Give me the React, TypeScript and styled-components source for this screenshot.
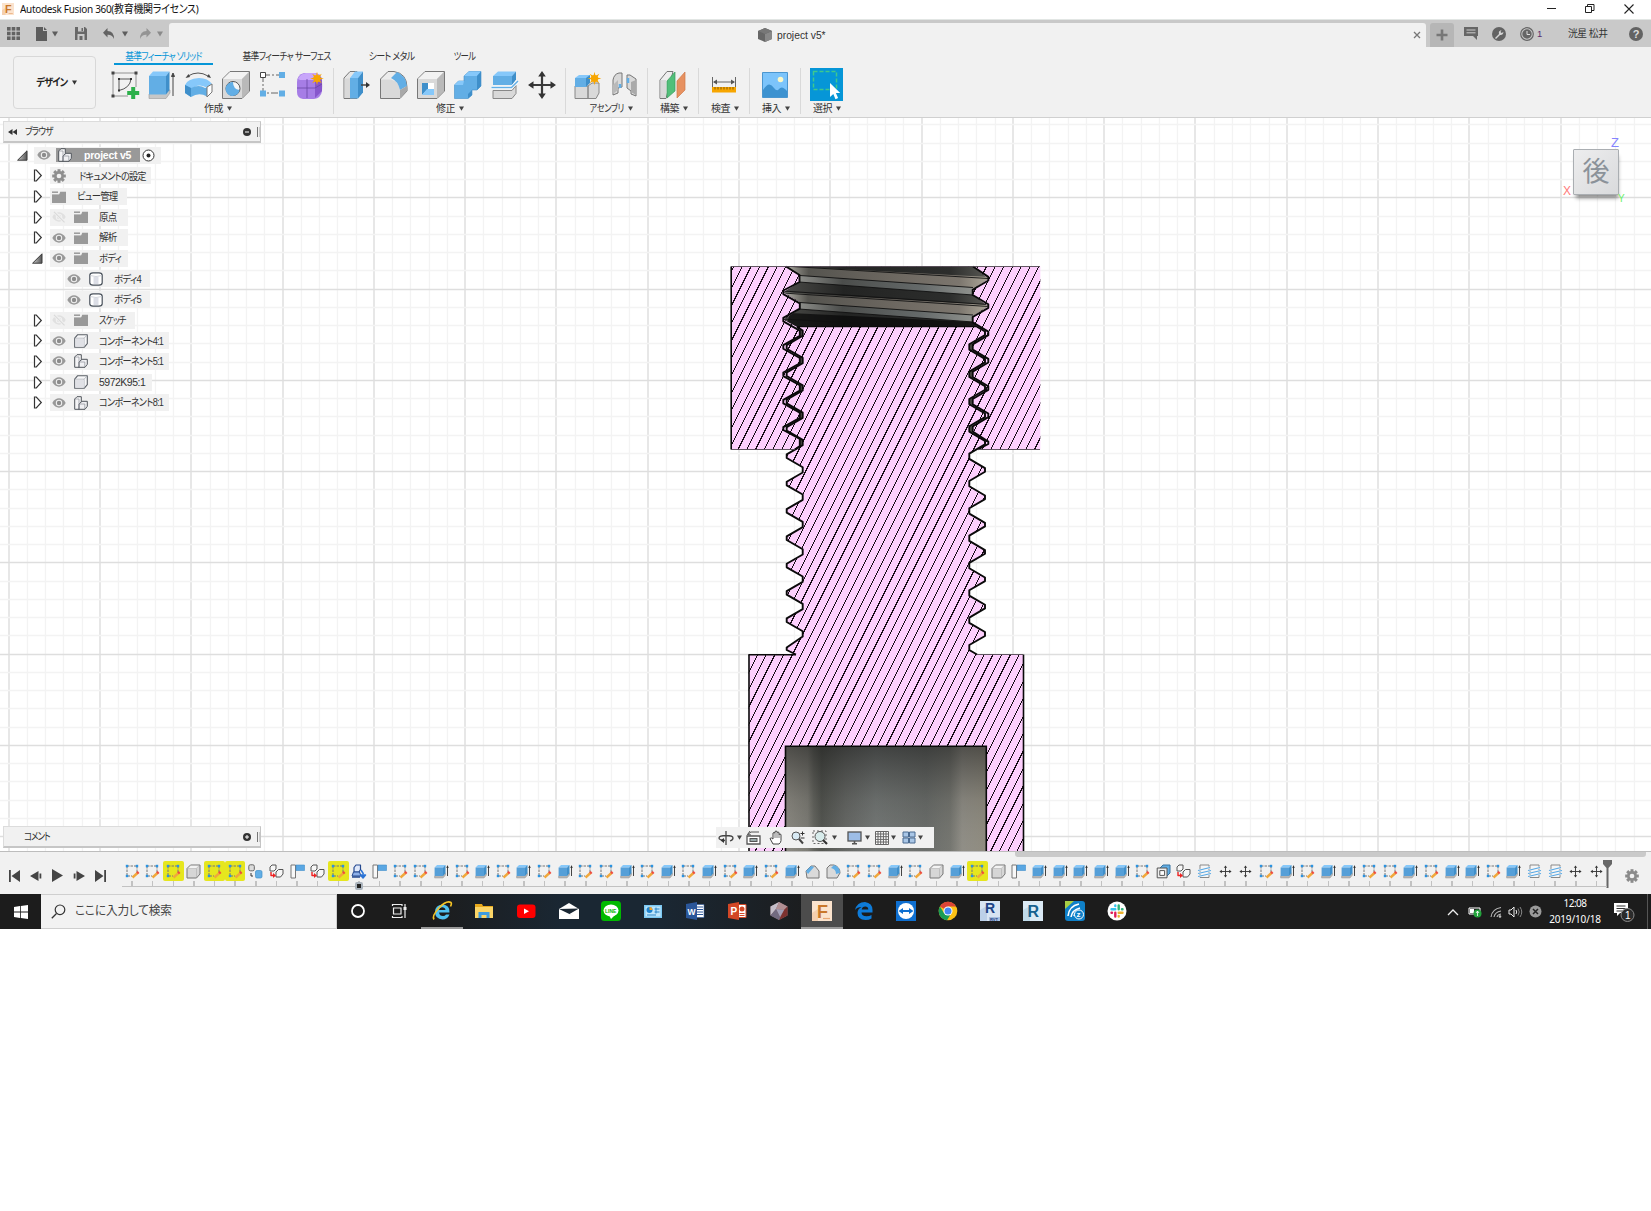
import React from "react";
import styled, { createGlobalStyle } from "styled-components";

const GlobalStyle = createGlobalStyle`
  * { box-sizing: border-box; }
  body { margin: 0; background: #fff; overflow: hidden; }
  svg { display: block; flex: none; overflow: visible; }
`;

const Screen = styled.div`
  width: 1651px;
  height: 1211px;
  background: #fff;
  display: flex;
  flex-direction: column;
  font-family: "Liberation Sans", "Noto Sans CJK JP", sans-serif;
  font-feature-settings: "palt";
  font-size: 10.5px;
  color: #333;
`;

const Label = styled.span<{ $ls?: number; $size?: number; $bold?: boolean; $color?: string; $sx?: number; $origin?: string }>`
  display: inline-block;
  white-space: nowrap;
  line-height: 1;
  letter-spacing: ${(p) => p.$ls ?? 0}px;
  font-size: ${(p) => p.$size ?? 10.5}px;
  font-weight: ${(p) => (p.$bold ? 700 : 400)};
  color: ${(p) => p.$color ?? "inherit"};
  transform: ${(p) => (p.$sx ? `scaleX(${p.$sx})` : "none")};
  transform-origin: ${(p) => p.$origin ?? "left"} center;
`;

const Gap = styled.div<{ $w: number }>`
  width: ${(p) => p.$w}px;
  flex: none;
`;

/* ---------- window title ---------- */
const TitleBar = styled.div`
  height: 20px;
  display: flex;
  align-items: center;
  padding: 0 17px 2px 2px;
  border-bottom: 1px solid #e2e6e4;
  color: #111;
  font-family: "Noto Sans", "Noto Sans CJK JP", sans-serif;
`;
const WindowButtons = styled.div`
  margin-left: auto;
  display: flex;
  align-items: center;
  gap: 29px;
`;

/* ---------- application bar ---------- */
const AppBar = styled.div`
  height: 27px;
  background: #c9c9c9;
  display: flex;
  align-items: flex-end;
`;
const QuickTools = styled.div`
  width: 169px;
  height: 27px;
  display: flex;
  align-items: center;
  padding-left: 7px;
`;
const DocTab = styled.div`
  width: 1257px;
  height: 24px;
  background: #f1f1f1;
  border-radius: 3px 3px 0 0;
  display: flex;
  align-items: center;
  padding-left: 589px;
`;
const CloseTab = styled.div`
  margin-left: auto;
  margin-right: 5px;
`;
const NewTab = styled.div`
  margin-left: 4px;
  width: 24px;
  height: 24px;
  background: #b6b6b6;
  border-radius: 3px 3px 0 0;
  display: grid;
  place-items: center;
`;
const AccountTools = styled.div`
  height: 27px;
  flex: 1;
  display: flex;
  align-items: center;
  padding-left: 10px;
`;

/* ---------- ribbon ---------- */
const Ribbon = styled.div`
  height: 71px;
  margin-bottom: -1px;
  background: #f1f1f1;
  border-bottom: 1px solid #d0d0d0;
  display: flex;
  padding-left: 13px;
`;
const Workspace = styled.button`
  margin: 9px 12px 0 0;
  padding: 0;
  width: 83px;
  height: 53px;
  border: 1px solid #d8d8d8;
  border-radius: 4px;
  background: #f2f2f2;
  display: flex;
  align-items: center;
  justify-content: center;
  gap: 5px;
  font: inherit;
  color: #222;
`;
const RibbonBody = styled.div`
  display: flex;
  flex-direction: column;
`;
const Tabs = styled.div`
  display: flex;
  height: 18px;
  padding-left: 6px;
`;
const Tab = styled.div<{ $active?: boolean; $w: number }>`
  width: ${(p) => p.$w}px;
  height: 18px;
  padding-top: 4px;
  display: flex;
  justify-content: center;
  border-bottom: ${(p) => (p.$active ? "2px solid #0696d7" : "none")};
  color: ${(p) => (p.$active ? "#0696d7" : "#333")};
`;
const Groups = styled.div`
  display: flex;
  padding-top: 3px;
`;
const Group = styled.div<{ $w: number; $shift: number }>`
  width: ${(p) => p.$w}px;
  height: 46px;
  flex: none;
  display: flex;
  flex-direction: column;
  align-items: center;
  padding-right: ${(p) => p.$shift}px;
  border-right: 1px solid #d9d9d9;
  &:last-child { border-right: none; }
`;
const IconRow = styled.div`
  height: 33px;
  display: flex;
  align-items: center;
  gap: 7px;
`;
const GroupLabel = styled.div`
  display: flex;
  align-items: center;
  gap: 4px;
  height: 13px;
  padding-top: 2px;
`;
const SelectTile = styled.div`
  width: 33px;
  height: 33px;
  background: #0696d7;
  display: grid;
  place-items: center;
`;

/* ---------- canvas and panels ---------- */
const CanvasArea = styled.div`
  position: relative;
  height: 734px;
  overflow: hidden;
  border-top: 1px solid #d0d0d0;
`;
const Overlay = styled.div<{ $x: number; $y: number }>`
  position: absolute;
  left: ${(p) => p.$x}px;
  top: ${(p) => p.$y - 1}px;
`;
const PanelBar = styled.div`
  width: 258px;
  height: 22px;
  background: #f1f1f1;
  border: 1px solid #dcdcdc;
  border-right-color: #c4c4c4;
  border-bottom: 2px solid #c6c6c6;
  display: flex;
  align-items: center;
  padding: 0 0 0 4px;
`;
const PanelEnd = styled.div`
  margin-left: auto;
  display: flex;
  align-items: center;
  gap: 6px;
`;
const Grip = styled.div`
  width: 3px;
  height: 10px;
  border-left: 1px solid #777;
  border-right: 1px solid #ccc;
`;
const Tree = styled.div`
  display: flex;
  flex-direction: column;
  padding-top: 2.5px;
`;
const TreeRow = styled.div<{ $indent: number }>`
  height: 20.62px;
  display: flex;
  align-items: center;
  padding-left: ${(p) => p.$indent}px;
`;
const TreeArrow = styled.div<{ $wide?: boolean }>`
  width: ${(p) => (p.$wide ? 18 : 17)}px;
  flex: none;
`;
const TreeBox = styled.div<{ $w: number }>`
  width: ${(p) => p.$w}px;
  height: 17px;
  background: #f1f1f1;
  display: flex;
  align-items: center;
  padding-left: 2px;
`;
const RootName = styled.div`
  width: 84px;
  height: 14px;
  margin: 0 2px 0 5px;
  background: #999;
  display: flex;
  align-items: center;
  padding-left: 2px;
  gap: 12px;
`;
const NavBar = styled.div`
  width: 218px;
  height: 21px;
  background: #f1f1f1;
  display: flex;
  align-items: center;
  padding-left: 2px;
`;
const Cube = styled.div`
  width: 46px;
  height: 46px;
  border: 1px solid #aaaeb2;
  border-radius: 1px;
  background: linear-gradient(135deg, #ededee, #d9dadc);
  box-shadow: 1px 5px 4px -2px rgba(0, 0, 0, 0.45);
  display: grid;
  place-items: center;
`;

/* ---------- timeline ---------- */
const TimelineBar = styled.div`
  height: 43px;
  background: #f1f1f1;
  border-top: 1px solid #bdbdbd;
  display: flex;
  flex-direction: column;
`;
const ScrollTrack = styled.div`
  height: 5px;
  flex: none;
  padding: 0 5px 0 1015px;
`;
const ScrollThumb = styled.div`
  height: 5px;
  background: #cacaca;
  border-radius: 0 0 3px 3px;
`;
const TimelineRow = styled.div`
  display: flex;
  height: 37px;
`;
const Playback = styled.div`
  width: 121.7px;
  flex: none;
  display: flex;
  align-items: center;
  gap: 10px;
  padding: 0 0 0 9px;
  height: 37px;
`;
const Feature = styled.div`
  position: relative;
  width: 20.64px;
  height: 30px;
  flex: none;
  display: flex;
  flex-direction: column;
  align-items: center;
  border-bottom: 1px solid #c2c2c2;
`;
const FeatureTile = styled.div<{ $on?: boolean }>`
  margin-top: 4px;
  width: 20.6px;
  height: 20px;
  border-radius: 2px;
  background: ${(p) => (p.$on ? "#e6e61e" : "transparent")};
  display: grid;
  place-items: center;
`;
const Tick = styled.div`
  width: 1.5px;
  height: 5px;
  background: #c2c2c2;
`;
const GroupMark = styled.div`
  position: absolute;
  top: 25px;
  width: 8px;
  height: 8px;
  background: #222;
  border: 2px solid #aab3bc;
  border-radius: 2px;
`;
const Playhead = styled.svg`
  margin: 3px 0 0 -4px;
`;

/* ---------- taskbar ---------- */
const Taskbar = styled.div`
  height: 35px;
  background: linear-gradient(90deg, #1c1c1c 0 26%, #1a2733 34%, #1a2733 40%, #1c1c1c 50%);
  display: flex;
`;
const StartButton = styled.div`
  width: 41px;
  display: grid;
  place-items: center;
`;
const SearchBox = styled.div`
  width: 295.5px;
  background: #f2f2f2;
  border: 1px solid #cfcfcf;
  border-left: 0;
  display: flex;
  align-items: center;
  padding-left: 10px;
  gap: 9px;
  color: #444;
  font-family: "Noto Sans", "Noto Sans CJK JP", sans-serif;
`;
const TaskItem = styled.div<{ $active?: boolean; $open?: boolean }>`
  width: 42.2px;
  height: 35px;
  padding-bottom: 1px;
  display: grid;
  place-items: center;
  background: ${(p) => (p.$active ? "#4c4c4c" : "transparent")};
  box-shadow: ${(p) => (p.$open || p.$active ? "inset 0 -2px 0 #9a9a9a" : "none")};
`;
const Tray = styled.div`
  margin-left: auto;
  display: flex;
  align-items: center;
  color: #fff;
  font-family: "Noto Sans", sans-serif;
`;
const Clock = styled.div`
  width: 56px;
  margin-left: 5px;
  display: flex;
  flex-direction: column;
  align-items: center;
  gap: 6px;
  padding-bottom: 2px;
`;
const ShowDesktop = styled.div`
  margin-left: 13px;
  width: 4px;
  height: 35px;
  border-left: 1px solid #555;
`;

/* ---------- small glyphs ---------- */
const Caret = ({ c = "#444", s = 5 }: { c?: string; s?: number }) => (
  <svg width={s} height={s} viewBox="0 0 6 6"><path d="M0 .6h6L3 5.6z" fill={c} /></svg>
);
const FusionLogo = ({ s }: { s: number }) => (
  <svg width={s} height={s} viewBox="0 0 20 20">
    <rect width="20" height="20" fill="#fbe3cd" />
    <path d="M0 12l6-4v12H0z" fill="#f5cfae" />
    <text x="5" y="16.5" fontSize="18" fontWeight="700" fill="#c9772b" fontFamily="Liberation Sans">F</text>
    <path d="M11 17.5h7" stroke="#e8a877" strokeWidth="1.2" />
  </svg>
);
const Gear = ({ s = 14, c = "#8f8f8f", hole = "#f1f1f1" }: { s?: number; c?: string; hole?: string }) => (
  <svg width={s} height={s} viewBox="-8 -8 16 16">
    {[0, 45, 90, 135].map((a) => (
      <rect key={a} x="-1.7" y="-7.8" width="3.4" height="15.6" fill={c} transform={`rotate(${a})`} />
    ))}
    <circle r="5.6" fill={c} />
    <circle r="2.7" fill={hole} />
  </svg>
);
const Eye = ({ off }: { off?: boolean }) => (
  <svg width="14" height="12" viewBox="0 0 14 12">
    <path d="M.3 6C3.500-.2 10.500-.2 13.700 6 10.500 12.200 3.500 12.200.3 6z" fill={off ? "#e0e0e0" : "#999"} />
    <circle cx="7" cy="6" r="3.200" fill="#f1f1f1" />
    <circle cx="7" cy="6" r="2.200" fill={off ? "#e0e0e0" : "#8c8c8c"} />
    {off && <path d="M2 .8l10.500 10.500" stroke="#f1f1f1" strokeWidth="3" />}
    {off && <path d="M2 .8l10.500 10.500" stroke="#dadada" strokeWidth="1.2" />}
  </svg>
);
const Folder = () => (
  <svg width="14" height="12" viewBox="0 0 14 12">
    <path d="M0 3.400h14V12H0z" fill="#999" />
    <path d="M0 1.200h6" stroke="#999" strokeWidth="1.500" />
    <path d="M7 4l1.200-3.300H14V4z" fill="#999" />
  </svg>
);
const BodyIcon = () => (
  <svg width="14" height="14" viewBox="0 0 14 14">
    <path d="M.8 3.200Q.8.800 4 .8h6q3.200 0 3.200 2.400v7.600q0 2.400-3.200 2.400H4Q.8 13.200.8 10.800z" fill="#fff" stroke="#4a525c" strokeWidth="1.200" />
    <path d="M4.500 5h5v7h-5z" fill="#dcdee6" />
    <path d="M1.500 3.600q5.500 1.800 11 0" stroke="#c5c9d0" fill="none" strokeWidth=".8" />
  </svg>
);
const PartIcon = () => (
  <svg width="14" height="14" viewBox="0 0 14 14">
    <path d="M.7 4.200L3.700.7h9.600v9l-3.200 3.600H.7z" fill="#f7f7f9" stroke="#5a5f66" strokeWidth="1.100" strokeLinejoin="round" />
    <path d="M.7 4.200h9.400v9.100M10.100 4.200L13.300.7" stroke="#aaaeb5" fill="none" strokeWidth=".8" />
    <path d="M1.300 4.800h8.200v7.900H1.300z" fill="#e0e1e6" />
  </svg>
);
const AssemblyIcon = ({ s = 14 }: { s?: number }) => (
  <svg width={s} height={s} viewBox="0 0 14 14">
    <path d="M.7 3L3 .7h4.300v5L5 13.300H.7z" fill="#f4f4f6" stroke="#50555c" strokeLinejoin="round" />
    <path d="M5 8l3-2.700h5.300v5L11 13.300H5z" fill="#f0f0f3" stroke="#50555c" strokeLinejoin="round" />
    <path d="M.7 3H5V13M5 8h5.800v5" stroke="#8c9198" strokeWidth=".7" fill="none" />
  </svg>
);
const ClosedArrow = () => (
  <svg width="10" height="13" viewBox="0 0 10 13"><path d="M1.500 1h1.800l5 5.500-5 5.500H1.500z" fill="#fff" stroke="#333" strokeWidth="1.200" /></svg>
);
const OpenArrow = () => (
  <svg width="11" height="11" viewBox="0 0 11 11">
    <defs><linearGradient id="tri" x1="0" x2="1" y1="0" y2="0"><stop offset="0" stopColor="#ccc" /><stop offset="1" stopColor="#555" /></linearGradient></defs>
    <path d="M10 .8V10.200H.6z" fill="url(#tri)" stroke="#3a3a3a" strokeWidth="1" />
  </svg>
);

/* ---------- ribbon icons ---------- */
const Ico = ({ children }: { children: React.ReactNode }) => (
  <svg width="30" height="30" viewBox="0 0 30 30" strokeLinejoin="round">{children}</svg>
);
const BLUE = "#62aee5";
const LIGHT = "#86c8fa";
const DEEP = "#3f8fca";
const GRAY = "#d9d9d9";
const EDGE = "#777";
const Star = ({ x, y }: { x: number; y: number }) => (
  <g transform={`translate(${x} ${y})`}>
    {[0, 45, 90, 135].map((a) => (
      <path key={a} d="M0-6.800L1.700 0 0 6.800-1.700 0z" fill="#f7a600" transform={`rotate(${a})`} />
    ))}
    <circle r="3.600" fill="#f7a600" />
  </g>
);
const SketchBig = () => (
  <Ico>
    <path d="M3 3h23v14M3 3v23h15" fill="none" stroke="#888" strokeWidth=".9" />
    {[[3, 3], [26, 3], [3, 26]].map(([x, y]) => <rect key={`${x}-${y}`} x={x - 1.500} y={y - 1.500} width="3" height="3" fill="#444" />)}
    <path d="M9 9h12q-1 9-12 11.500z" fill="none" stroke="#555" />
    {[[9, 9], [21, 9], [9, 20.500]].map(([x, y]) => <rect key={`${x}-${y}`} x={x - 1} y={y - 1} width="2" height="2" fill="#333" />)}
    <path d="M21.200 17h4v4h4v4h-4v4h-4v-4h-4v-4h4z" fill="#2db04b" />
  </Ico>
);
const ExtrudeBig = () => (
  <Ico>
    <path d="M2 24l4-3 17-1v3l-4 5.500H2z" fill="#c7c7c7" stroke="#999" strokeWidth=".6" />
    <path d="M2 6l4-4.500h16.500L19 6z" fill={LIGHT} />
    <path d="M2 6h17v18.500H2z" fill={BLUE} />
    <path d="M19 6l3.500-4.500V20L19 24.500z" fill={DEEP} />
    <path d="M26 5v21M24.500 6.500L26 3l1.500 3.500z" stroke="#444" fill="#444" />
  </Ico>
);
const RevolveBig = () => (
  <Ico>
    <path d="M1 15q2-6 14-7 9 0 13 6l-5 4Q15 12 6 20z" fill={LIGHT} />
    <path d="M1 15l6 3q8-4 14 0l2 0v8.500q-8-4.500-16 .5l-6-4z" fill={BLUE} />
    <path d="M1 15l6 3v9l-6-4z" fill={DEEP} />
    <path d="M23 17l5-3v8l-5 5z" fill="#fff" stroke={EDGE} />
    <path d="M4 6q10-6 20 0" fill="none" stroke="#555" />
    <path d="M1.500 8l3-4 1.500 3zM27 8l-4-1 1.800-3z" fill="#444" />
  </Ico>
);
const CubeBase = () => (
  <>
    <path d="M1.500 9L9 1.500h19.500V21L21 28.500H1.500z" fill={GRAY} stroke={EDGE} />
    <path d="M2 9L9.200 2h18.500L21 9z" fill="#f2f2f2" />
    <path d="M21 9l7-7v19l-7 7z" fill="#b9b9b9" />
  </>
);
const HoleBig = () => (
  <Ico>
    <CubeBase />
    <circle cx="12" cy="18.500" r="7" fill="#f6f6f6" stroke="#555" />
    <path d="M12 12a7 7 0 106.500 8Q12 19 12 12z" fill={BLUE} />
  </Ico>
);
const PatternBig = () => (
  <Ico>
    <path d="M5 5h19M5 5v18h19" stroke="#666" fill="none" strokeDasharray="7 2 2 2" />
    <rect x="2.500" y="2.500" width="5" height="5" fill="#fff" stroke="#444" />
    <rect x="21" y="2" width="6" height="6" fill={BLUE} /><rect x="2" y="20.500" width="6" height="6" fill={BLUE} />
    <rect x="21" y="20.500" width="6" height="6" fill={BLUE} />
  </Ico>
);
const FormBig = () => (
  <Ico>
    <path d="M2 12Q2 5 9 3h12q6 2 6 8v10q-1 7-8 8H8Q2 28 2 22z" fill="#a67de6" />
    <path d="M3 9q2-5 8-6h9q4 1 5 3l-4 4H5z" fill="#c8a6fa" />
    <path d="M20 10l6-3q1.500 4 1 14l-7 7z" fill="#8756cc" />
    <path d="M2 18h18l7-4M12 9v19" stroke="#6b46a5" strokeWidth=".8" fill="none" />
    <Star x={22} y={8.500} />
  </Ico>
);
const PressPull = () => (
  <Ico>
    <path d="M2 8l6-6.500h7V28.500H2z" fill="#e6e6e6" stroke={EDGE} />
    <path d="M2.500 8.500h6V28h-6z" fill={GRAY} />
    <path d="M8 8l5-6.500h8L16 8z" fill={LIGHT} /><path d="M8 8h8v20.500H8z" fill={BLUE} />
    <path d="M16 8l5-6.500v21L16 28.500z" fill={DEEP} />
    <path d="M19 15h7" stroke="#444" strokeWidth="1.500" /><path d="M24 12l4 3-4 3z" fill="#333" />
  </Ico>
);
const FilletBig = () => (
  <Ico>
    <path d="M1.500 9L9 1.500h6q13 2 13 16V21l-7 7.500H1.500z" fill="#ececec" stroke={EDGE} />
    <path d="M2 9.500h10Q21 12 21 21v7H2z" fill={GRAY} />
    <path d="M12 8l6-6q9 4 10 14l-7 4Q19 11 12 8z" fill={BLUE} />
    <path d="M21 20l7-4v5l-7 7z" fill="#a8a8a8" />
  </Ico>
);
const ShellBig = () => (
  <Ico>
    <CubeBase />
    <rect x="6" y="13" width="12" height="12" fill="#fff" />
    <path d="M6 13h6v6l-6 6z" fill={DEEP} /><path d="M6 25l5-6h7v6z" fill={LIGHT} />
  </Ico>
);
const CombineBig = () => (
  <Ico>
    <path d="M1.500 15l4-4H11V6l5-4.500h12V16l-4 4h-5v5l-4 3.500H1.500z" fill={BLUE} stroke={DEEP} strokeWidth=".6" />
    <path d="M11 6l5-4.500h12L24 6z" fill={LIGHT} /><path d="M24 6l4-4.500V16l-4 4z" fill={DEEP} />
    <path d="M1.500 15l4-4H11l-1 4z" fill={LIGHT} /><path d="M15 24l4-4v5l-4 3.500z" fill={DEEP} />
  </Ico>
);
const SplitBig = () => (
  <Ico>
    <path d="M3 6l5-4.500h18L22 6z" fill={LIGHT} /><path d="M3 6h19v9H3z" fill={BLUE} /><path d="M22 6l4-4.500v8L22 15z" fill={DEEP} />
    <path d="M3 20.500h19l4-5v8L22 28.500H3z" fill={GRAY} stroke="#888" />
    <path d="M1.500 17.500h20L28 11" stroke="#fff" strokeWidth="3" fill="none" />
    <path d="M1.500 17.500h20L28 11" stroke={BLUE} strokeWidth="1.500" fill="none" />
  </Ico>
);
const MovePath = () => (
  <>
    <path d="M15 5v20M5 15h20" stroke="#3a3a3a" strokeWidth="2.200" />
    <path d="M15 1l3.800 5.500h-7.600zM15 29l3.800-5.500h-7.600zM1 15l5.500-3.800v7.600zM29 15l-5.500-3.800v7.600z" fill="#333" />
  </>
);
const MoveBig = () => <Ico><MovePath /></Ico>;
const NewComp = () => (
  <Ico>
    <path d="M2 16h13v12.500H2zM15 16l4-3h7v10l-3 5.500H15z" fill={GRAY} stroke="#888" />
    <path d="M2 8l4-3h11l-2 3z" fill={LIGHT} /><path d="M2 8h11v9H2z" fill={BLUE} /><path d="M13 8l4-3v8l-4 4z" fill={DEEP} />
    <Star x={21.500} y={8.500} />
  </Ico>
);
const JointBig = () => (
  <Ico>
    <path d="M3 25V10q1-6 6-7h3v14l-4 1v5z" fill={GRAY} stroke={EDGE} /><path d="M3 24v-9l5-5v10z" fill="#b9b9b9" />
    <path d="M26 26V9l-6-4h-3v13l4 3v3z" fill={GRAY} stroke={EDGE} /><path d="M21 12l5-2v15l-5-3z" fill="#aaa" />
    <path d="M13 9v7h3V9z" fill="#f1f1f1" /><path d="M18 8v5M10 14v4" stroke={BLUE} strokeWidth="2.500" />
  </Ico>
);
const PlaneBig = () => (
  <Ico>
    <path d="M2 10l7-8.500h6L8 28.500H2z" fill="#eee" stroke={EDGE} /><path d="M2.500 10H8v18H2.500z" fill={GRAY} />
    <path d="M9 11l8-9v19l-8 7z" fill="#52bf7a" stroke="#399b5b" strokeWidth=".7" />
    <path d="M19 11l8-9v18l-8 8z" fill="#e79160" stroke="#cf7847" strokeWidth=".7" />
  </Ico>
);
const MeasureBig = () => (
  <Ico>
    <path d="M3.500 7v10M26.500 7v10M5 12h20" stroke="#666" fill="none" /><path d="M4 12l4-2.500v5zM26 12l-4-2.500v5z" fill="#555" />
    <rect x="3" y="17" width="24" height="5.500" fill="#f7a600" />
    <path d="M6 17v2.500M9 17v2.500M12 17v2.500M15 17v2.500M18 17v2.500M21 17v2.500M24 17v2.500" stroke="#8a5b00" />
  </Ico>
);
const ImageBig = () => (
  <Ico>
    <rect x="2.500" y="2.500" width="25" height="25" fill="#7cc4fb" stroke="#4b96cf" />
    <path d="M3 20Q9 10 14 18q3 4 5 1 3-4 8 2v6H3z" fill="#3d92d0" /><circle cx="20.500" cy="9.500" r="2.800" fill="#fbf8c8" />
  </Ico>
);
const SelectBig = () => (
  <svg width="31" height="31" viewBox="0 0 31 31">
    <rect x="2.500" y="2.500" width="23" height="18" fill="none" stroke="#3fc88d" strokeWidth="1.500" strokeDasharray="4 2" />
    <path d="M19 14v14l3.300-3 2.200 5.200 2.600-1.200-2.200-5h4.300z" fill="#fff" />
  </svg>
);

/* ---------- timeline icons ---------- */
const T = ({ children }: { children: React.ReactNode }) => (
  <svg width="15" height="15" viewBox="0 0 15 15" strokeLinejoin="round">{children}</svg>
);
const TSketch = () => (
  <T>
    <path d="M2 2h10M2 2v10h5M12 2v6" stroke="#777" strokeDasharray="2.500 1" fill="none" />
    {[[2, 2], [12, 2], [2, 12]].map(([x, y]) => <rect key={`${x}${y}`} x={x - 1.200} y={y - 1.200} width="2.400" height="2.400" fill="#2b93e0" />)}
    <path d="M7.500 13.500l5-4.500" stroke="#f0a83c" strokeWidth="2.400" /><path d="M12 9.300l1.600-1.400" stroke="#ee4b3e" strokeWidth="2.600" />
  </T>
);
const TExtrude = () => (
  <T>
    <path d="M.6 12v2H9l2.500-3V9z" fill="#b5b5b5" stroke="#999" strokeWidth=".5" />
    <path d="M.6 3.500L3 1h8.500L9 3.500z" fill={LIGHT} /><path d="M.6 3.500H9V12H.6z" fill="#559fd8" /><path d="M9 3.500L11.500 1v8L9 12z" fill={DEEP} />
    <path d="M13.500 2v10" stroke="#444" /><path d="M12.300 4l1.200-3 1.200 3z" fill="#333" />
  </T>
);
const TBox = () => (
  <T><path d="M1 4.500L4.500 1H14v9l-3.500 4H1z" fill="#d6d6d6" stroke="#777" /><path d="M1.500 4.500L4.700 1.500h8.500l-3 3zM10.500 4.500v9" fill="#f3f3f3" stroke="#999" strokeWidth=".4" /></T>
);
const TComp = () => (
  <T><rect x=".8" y=".8" width="5.500" height="6" rx="1.500" fill="#ddd" stroke="#666" /><path d="M3 9v3h2" stroke="#333" fill="none" /><rect x="7.500" y="6.500" width="6.500" height="7.500" rx="1.500" fill={BLUE} stroke={DEEP} strokeWidth=".7" /></T>
);
const TLink = () => (
  <T><path d="M1 3l2-2h4v4L5 7H1zM7 8l2.500-2.500H14v4.500L11.500 13H7z" fill="#f7f7f7" stroke="#555" /><path d="M2 8v3.500h3" stroke="#e22" strokeWidth="1.400" fill="none" /><path d="M4 9l3 2.500L4 14z" fill="#e22" /></T>
);
const TFlag = () => (
  <T><path d="M1 1h4.500v13H1z" fill="#f8f8f8" stroke="#777" /><path d="M6 1h8.500v5.500H6z" fill="#5aa7e3" stroke={DEEP} strokeWidth=".6" /></T>
);
const TInsert = () => (
  <T>
    <path d="M3 7V3.500L5 1h4.500v4.500L8 8H3z" fill="#dfe8fa" stroke="#25498f" strokeWidth="1.200" />
    <path d="M1 12l1.500-4h6L10 12z" fill="#8fb0e8" stroke="#25498f" /><path d="M1 13h8" stroke="#25498f" strokeWidth="1.500" />
    <path d="M10 6l2.500 4M9.500 11h5L12 14z" fill="#2b74d6" stroke="#2b74d6" strokeWidth="1.500" />
  </T>
);
const TChamfer = () => (
  <T><path d="M1 7l5-5h4l4 5v7H2z" fill="#dadada" stroke="#777" /><path d="M1 7l5-5 3 1-6 7z" fill={BLUE} /></T>
);
const TFillet = () => (
  <T><path d="M1 4l3-3h4q6 2 6 8l-3 5H1z" fill="#dadada" stroke="#777" /><path d="M5 4l3-3q6 2 6 8l-4 1Q10 5 5 4z" fill={BLUE} /></T>
);
const TShell = () => (
  <T><path d="M4 4l3-3h7v8l-3 3" fill={BLUE} stroke="#3672a0" /><rect x="1.200" y="4" width="9.800" height="9.800" fill="#eee" stroke="#555" /><rect x="3.800" y="6.600" width="4.800" height="4.800" fill="#fff" stroke="#555" /></T>
);
const TSplit = () => (
  <T><path d="M3 1h9v12.500H3z" fill="#f6f6f6" stroke="#888" /><path d="M1 6.500l12-3M1 9.500l13-3M1 12.500l13-3" stroke="#f6f6f6" strokeWidth="2" /><path d="M1 6.500l12-3M1 9.500l13-3M1 12.500l13-3" stroke="#58a8e4" strokeWidth="1.200" /></T>
);
const TMove = () => <svg width="13" height="13" viewBox="0 0 30 30"><MovePath /></svg>;

const FEATURES: Record<string, () => React.ReactElement> = {
  S: TSketch, Y: TSketch, E: TExtrude, B: TBox, C: TComp, L: TLink, F: TFlag, I: TInsert,
  H: TChamfer, R: TFillet, K: TShell, P: TSplit, M: TMove,
};
const SEQUENCE = "SSYBYYCLFLYIFSSESESESESSESESESESEHRSSESBEYBFEEEEESKLPMMSESEESSESEESEPPMM";

/* ---------- section view ---------- */
const PITCH = 27.33;
const thread = (crest: number, root: number, y0: number, n: number) => {
  let d = "";
  for (let i = 0; i < n; i++) {
    const y = y0 + i * PITCH;
    d += `L${crest} ${y - 1.800}L${crest} ${y + 1.800}L${root} ${y + 11}L${root} ${y + 16.300}`;
  }
  return d;
};
const threadUp = (crest: number, root: number, y0: number, n: number) => {
  let d = "";
  for (let i = n - 1; i >= 0; i--) {
    const y = y0 + i * PITCH;
    d += `L${root} ${y + 16.300}L${root} ${y + 11}L${crest} ${y + 1.800}L${crest} ${y - 1.800}`;
  }
  return d;
};
const screwL = `M797 326.700L802.700 330.500L802.700 335.700${thread(786.700, 802.700, 346.900, 11)}L786.700 647.500V650L796 654.500`;
const screwR = `M977 326.700${thread(985, 969.300, 333.300, 11)}L985 632V636L969.300 645V650L977 654.500`;
const nutL = `M786 266.500L799.500 275V282${thread(783.300, 799.800, 292.300, 5)}L783.300 427.200V430L799.800 439V446L795 449.500`;
const nutR = `M973 266.500${thread(988.300, 972.700, 278.700, 6)}L988.300 441.500V444L978 449.500`;
const screwFill = `${screwL}H748.700V852H785.500V746.300H986.300V852H1023.500V654.500H977L969.300 650V645L985 636V632${threadUp(985, 969.300, 333.300, 11)}L977 326.700z`;

const GRID0X = 8.700;
const GRID0Y = 106.700;
const STEP = 18.258;
const HATCH_STEP = 8.720;

const SectionView = () => (
  <svg width="1651" height="734" viewBox="0 118 1651 734">
    <defs>
      <linearGradient id="bore" x1="0" x2="1" y1="0" y2="0">
        <stop offset="0" stopColor="#8b8981" /><stop offset=".11" stopColor="#7b7a73" /><stop offset=".14" stopColor="#62635d" /><stop offset=".18" stopColor="#50524d" />
        <stop offset=".3" stopColor="#636562" /><stop offset=".45" stopColor="#717573" /><stop offset=".7" stopColor="#686b68" />
        <stop offset=".82" stopColor="#73746e" /><stop offset=".88" stopColor="#8f8d85" /><stop offset="1" stopColor="#8f8b7e" />
      </linearGradient>
      <linearGradient id="boreShade" x1="0" x2="0" y1="0" y2="1">
        <stop offset="0" stopColor="#111" stopOpacity=".5" /><stop offset=".5" stopColor="#222" stopOpacity=".12" /><stop offset="1" stopColor="#aaa" stopOpacity=".05" />
      </linearGradient>
      <linearGradient id="beige" x1="0" x2="1" y1="0" y2="0">
        <stop offset="0" stopColor="#b5b3aa" /><stop offset=".12" stopColor="#55544f" /><stop offset=".5" stopColor="#6b665f" /><stop offset=".85" stopColor="#7c766e" /><stop offset="1" stopColor="#b0aa9c" />
      </linearGradient>
      <linearGradient id="steel" x1="0" x2="1" y1="0" y2="0">
        <stop offset="0" stopColor="#8d8e8a" /><stop offset=".25" stopColor="#4b4d4b" /><stop offset=".7" stopColor="#656a6a" /><stop offset="1" stopColor="#8f918d" />
      </linearGradient>
      <linearGradient id="coal" x1="0" x2="1" y1="0" y2="0">
        <stop offset="0" stopColor="#4e4e4b" /><stop offset=".3" stopColor="#232423" /><stop offset=".8" stopColor="#2c2d2c" /><stop offset="1" stopColor="#5d5d58" />
      </linearGradient>
      <clipPath id="threadHole">
        <path d="M786 266.500L799.500 275V282L783.300 292.300L799.800 302V309L783.300 319.600L797 326.700H978L972.700 321V316L988.300 306L972.700 295V289L988.300 278.700L973 266.500z" />
      </clipPath>
      <clipPath id="solid">
        <path d="M731 266.500H1040.300V449.500H731z" />
        <path d={screwFill} />
      </clipPath>
    </defs>
    <rect y="118" width="1651" height="734" fill="#fff" />
    {Array.from({ length: 91 }, (_, i) => {
      const x = Math.round(GRID0X + i * STEP) + (i % 5 === 0 ? 0 : 0.5);
      return <path key={i} d={`M${x} 118V852`} stroke={i % 5 === 0 ? "#dfdfdf" : "#f3f3f3"} strokeWidth={i % 5 === 0 ? 1.500 : 1.300} />;
    })}
    {Array.from({ length: 41 }, (_, i) => {
      const y = Math.floor(GRID0Y + i * 18.250) + 0.5;
      return <path key={i} d={`M0 ${y}H1651`} stroke={i % 5 === 0 ? "#dedede" : "#f3f3f3"} strokeWidth={1.300} />;
    })}

    <g clipPath="url(#solid)">
      <rect x="720" y="260" width="330" height="592" fill="#fdcffd" />
      <g stroke="#160c16" strokeWidth="1" shapeRendering="crispEdges">
        {Array.from({ length: 74 }, (_, i) => {
          const x = 733.600 + i * HATCH_STEP;
          return <path key={i} d={`M${x} 266.500L${x - 292.750} 852`} />;
        })}
      </g>
    </g>
    <g clipPath="url(#threadHole)">
      <path d="M780 264H992V330H780z" fill="url(#coal)" />
      <path d="M784 266L990 277V288H973L800 275.500z" fill="url(#beige)" />
      <path d="M799 275.500L973 287.500V295L799 282z" fill="url(#steel)" />
      <path d="M783 292.300L990 305V316H973L800 302.500z" fill="url(#beige)" />
      <path d="M799 302.500L973 315V322L799 309z" fill="url(#steel)" />
      <path d="M790 313L973 322L980 330H785z" fill="#090909" opacity=".75" />
      <path d="M784 266L988 278.500M800 275.500L973 287.500M799 282L973 295M783 291L988 304.500M783 293L988 306.500M800 302.500L973 315M799 309L973 322M783 319L900 326" stroke="#111" strokeWidth=".9" fill="none" />
    </g>
    <rect x="785.500" y="746.300" width="200.800" height="106" fill="url(#bore)" />
    <rect x="785.500" y="746.300" width="200.800" height="106" fill="url(#boreShade)" />
    <path d="M785.500 852V746.300H986.300V852" stroke="#0a0a0a" strokeWidth="1.600" fill="none" />
    <path d={Array.from({ length: 5 }, (_, i) => `M799.800 ${330 + i * PITCH}h3v6.500h-3z`).join("")} fill="#55554e" />
    <path d={Array.from({ length: 4 }, (_, i) => `M969.300 ${343.500 + i * PITCH}h3.400v6.500h-3.400z`).join("")} fill="#55554e" />
    <g fill="none" stroke="#0a0a0a" strokeWidth="1.900" strokeLinejoin="round">
      <path d={nutL} /><path d={nutR} /><path d={screwL} /><path d={screwR} />
      <path d="M797 326.700H977" strokeWidth="1.200" />
      <path d="M731.200 266.500V449.500M749 852V654.800H796M1023.500 654.500V852" strokeWidth="1.600" />
      <path d="M731 266.500H1040M731 449.500H795M978 449.500H1040M977 654.500H1023" strokeWidth=".9" stroke="#514751" />
    </g>
  </svg>
);

/* ---------- browser tree ---------- */
type Node = { open?: boolean; leaf?: boolean; eye?: "on" | "off"; icon: "gear" | "folder" | "body" | "part" | "asm"; name: string; w: number; ls?: number; sx?: number };
const NODES: Node[] = [
  { icon: "gear", name: "ドキュメントの設定", w: 101, ls: -1, sx: 0.88 },
  { icon: "folder", name: "ビュー管理", w: 77, ls: -0.9, sx: 0.89 },
  { eye: "off", icon: "folder", name: "原点", w: 78, ls: -0.8, sx: 0.9 },
  { eye: "on", icon: "folder", name: "解析", w: 78, ls: -0.8, sx: 0.9 },
  { open: true, eye: "on", icon: "folder", name: "ボディ", w: 78, ls: -0.8, sx: 0.88 },
  { leaf: true, eye: "on", icon: "body", name: "ボディ4", w: 85, ls: -0.8, sx: 0.9 },
  { leaf: true, eye: "on", icon: "body", name: "ボディ5", w: 85, ls: -0.8, sx: 0.9 },
  { eye: "off", icon: "folder", name: "スケッチ", w: 85, ls: -1.200, sx: 0.82 },
  { eye: "on", icon: "part", name: "コンポーネント4:1", w: 119, ls: -0.8, sx: 0.87 },
  { eye: "on", icon: "asm", name: "コンポーネント5:1", w: 119, ls: -0.8, sx: 0.87 },
  { eye: "on", icon: "part", name: "5972K95:1", w: 102, ls: -0.5 },
  { eye: "on", icon: "asm", name: "コンポーネント8:1", w: 119, ls: -0.8, sx: 0.87 },
];
const NODE_ICONS = { gear: <Gear />, folder: <Folder />, body: <BodyIcon />, part: <PartIcon />, asm: <AssemblyIcon /> };

const BrowserTree = () => (
  <Tree>
    <TreeRow $indent={17}>
      <TreeArrow><OpenArrow /></TreeArrow>
      <TreeBox $w={127}>
        <Gap $w={1} /><Eye />
        <RootName><AssemblyIcon /><Label $bold $color="#fff" $ls={-0.25}>project v5</Label></RootName>
        <svg width="13" height="13" viewBox="0 0 13 13"><circle cx="6.500" cy="6.500" r="5.500" fill="#fff" stroke="#333" /><circle cx="6.500" cy="6.500" r="2" fill="#222" /></svg>
      </TreeBox>
    </TreeRow>
    {NODES.map((n) => (
      <TreeRow key={n.name} $indent={n.leaf ? 65 : n.open ? 32 : 33}>
        {!n.leaf && <TreeArrow $wide={n.open}>{n.open ? <OpenArrow /> : <ClosedArrow />}</TreeArrow>}
        <TreeBox $w={n.w}>
          {n.eye && <><Eye off={n.eye === "off"} /><Gap $w={8} /></>}
          {NODE_ICONS[n.icon]}
          <Gap $w={n.icon === "gear" ? 13 : 11} />
          <Label $ls={n.ls} $sx={n.sx}>{n.name}</Label>
        </TreeBox>
      </TreeRow>
    ))}
  </Tree>
);

const RoundBadge = ({ plus }: { plus?: boolean }) => (
  <svg width="8" height="8" viewBox="0 0 8 8"><circle cx="4" cy="4" r="4" fill="#333" /><path d={plus ? "M2 4h4M4 2v4" : "M2 4h4"} stroke="#fff" /></svg>
);

/* ---------- navigation toolbar glyphs ---------- */
const NavIcons = () => (
  <>
    <svg width="16" height="16" viewBox="0 0 16 16" fill="none" stroke="#444"><path d="M8 1v14M12 11q3-1 3-3 0-2.500-7-2.500T1 8q0 2 6 2.500" strokeWidth="1.300" /><path d="M6 8v5L2.500 10.500z" fill="#333" stroke="none" /></svg>
    <Gap $w={3} /><Caret /><Gap $w={4} />
    <svg width="15" height="15" viewBox="0 0 15 15" fill="none" stroke="#555"><path d="M1 6h13v8H1z" fill="#fff" strokeWidth="1.300" /><rect x="4" y="8.500" width="7" height="3" fill="#9aa" /><path d="M1.500 4.500L5 2h8M4 1L1.500 4.500 5 5" /></svg>
    <Gap $w={8} />
    <svg width="15" height="15" viewBox="0 0 15 15"><path d="M4 14L1 8.500q1-1.500 3 .5V3q1-1 2 0V1.500q1-1 2 0V2.500q1-1 2 0v2q1-1 2 0v6q0 2-2 3.500z" fill="#fff" stroke="#444" /><path d="M6 3v5M8 2.500V8M10 3.500V8" stroke="#555" strokeWidth=".8" /></svg>
    <Gap $w={6} />
    <svg width="16" height="15" viewBox="0 0 16 15"><circle cx="6" cy="6" r="4" fill="#d8eaf4" stroke="#555" /><path d="M9 9l4 4.500" stroke="#444" strokeWidth="2" /><path d="M10.500 3.500h4M12.500 1.500v4M10.500 8h4" stroke="#333" /></svg>
    <Gap $w={6} />
    <svg width="16" height="15" viewBox="0 0 16 15"><rect x="1" y="1" width="13" height="12.500" fill="none" stroke="#666" strokeDasharray="2 2" /><circle cx="8" cy="6.500" r="5" fill="#d8ecec" stroke="#555" /><path d="M11 10l4 4" stroke="#333" strokeWidth="2.200" /></svg>
    <Gap $w={4} /><Caret /><Gap $w={10} />
    <svg width="15" height="14" viewBox="0 0 15 14"><rect x="1" y="1" width="13" height="9" fill="#9dbde6" stroke="#555" strokeWidth="1.300" /><path d="M5 12.800h5M7.500 10v2" stroke="#555" strokeWidth="1.600" /></svg>
    <Gap $w={3} /><Caret /><Gap $w={5} />
    <svg width="14" height="14" viewBox="0 0 14 14"><path d="M.5.5h13v13H.5zM3 0v14M5.700 0v14M8.400 0v14M11 0v14M0 3h14M0 5.700h14M0 8.400h14M0 11h14" stroke="#666" fill="#fff" /></svg>
    <Gap $w={2} /><Caret /><Gap $w={6} />
    <svg width="14" height="13" viewBox="0 0 14 13"><path d="M1 1h5.500v5H1zM7.500 1H13v5H7.500zM1 7h5.500v5H1zM7.500 7H13v5H7.500z" fill="#a9c6e6" stroke="#4a6a90" /></svg>
    <Gap $w={2} /><Caret />
  </>
);

/* ---------- taskbar icons ---------- */
const W = ({ children }: { children: React.ReactNode }) => <svg width="20" height="20" viewBox="0 0 20 20">{children}</svg>;
const Letter = ({ x, y, s, c, t }: { x: number; y: number; s: number; c: string; t: string }) => (
  <text x={x} y={y} fontSize={s} fontWeight="700" fill={c} fontFamily="Liberation Sans">{t}</text>
);
const TASKS: { id: string; active?: boolean; open?: boolean; icon: React.ReactNode }[] = [
  { id: "cortana", icon: <W><circle cx="10" cy="10" r="6" fill="none" stroke="#fff" strokeWidth="1.800" /></W> },
  { id: "views", icon: <W><path d="M2.500 5V3.500h9.500V5M2.500 15v1.500h9.500V15M3.500 7h7.500v6H3.500zM15 3v14" fill="none" stroke="#eee" strokeWidth="1.200" /><rect x="13.500" y="6" width="3" height="3" fill="#eee" /></W> },
  { id: "ie", open: true, icon: <W><path d="M17.500 11.500H7q.5 3.500 4 3.500 2 0 3-1.500h3.500Q15.500 18.500 10.500 18.500 3 18 3 11q0-7 7.500-7.500 7.500.5 7 8zM7 9h6.500q-.5-2.700-3.200-2.700T7 9z" fill="#4fc0f0" /><path d="M2 18.500Q-.5 15 7 7t12-5.500q1 1-.5 4" fill="none" stroke="#f5c326" strokeWidth="1.600" /></W> },
  { id: "files", icon: <W><path d="M1 3h7l1 2h10v12H1z" fill="#e8a91c" /><path d="M1 6h18v11H1z" fill="#fbd567" /><path d="M4.500 17v-6h11v6h-3v-3h-5v3z" fill="#3d9be0" /></W> },
  { id: "video", icon: <W><rect x="1" y="3.500" width="18.500" height="13.500" rx="3" fill="#f00" /><path d="M8 7.500l5 2.800-5 2.800z" fill="#fff" /></W> },
  { id: "mail", icon: <W><path d="M0 8l10-6 10 6v10H0z" fill="#fff" /><path d="M0 8l20-.500L10.500 13l5 2.500z" fill="#1a2733" /></W> },
  { id: "line", icon: <W><rect width="20" height="20" rx="3.500" fill="#00b900" /><ellipse cx="10" cy="9.500" rx="7.500" ry="6" fill="#fff" /><path d="M8 14l2 4 5-5z" fill="#fff" /><Letter x={4} y={11.500} s={5} c="#00b900" t="LINE" /></W> },
  { id: "control", icon: <W><rect x="1" y="4" width="18" height="13" fill="#7cc9f3" /><rect x="2.500" y="5.500" width="15" height="10" fill="#bfe6fb" /><circle cx="6.500" cy="9" r="3" fill="#1f83cf" /><path d="M6.500 9V6a3 3 0 013 3z" fill="#f3a32b" /><path d="M11.500 8h5M11.500 11h5M13 6.500v6M4 14h9" stroke="#2d86c9" /></W> },
  { id: "word", icon: <W><path d="M10 3.500h9v13h-9z" fill="#fff" stroke="#2b579a" strokeWidth=".6" /><path d="M12 6h6M12 8.500h6M12 11h6M12 13.500h6" stroke="#2b579a" /><path d="M1 3l11-2v18L1 17z" fill="#2b579a" /><Letter x={2.500} y={13.500} s={8.500} c="#fff" t="W" /></W> },
  { id: "slides", icon: <W><path d="M10 3.500h9v13h-9z" fill="#fff" stroke="#d24726" /><circle cx="15" cy="8" r="2.500" fill="#d24726" /><path d="M12.500 12.500h5M12.500 14.500h5" stroke="#d24726" /><path d="M1 3l11-2v18L1 17z" fill="#d24726" /><Letter x={3.500} y={14} s={10} c="#fff" t="P" /></W> },
  { id: "mesh", icon: <W><path d="M10 1l8.500 4.500v9L10 19l-8.500-4.500v-9z" fill="#8c6b70" /><path d="M10 1L1.500 5.500 7 8zM7 8l-5.500 6.500v-9z" fill="#c4bec9" /><path d="M10 1l8.500 4.500L15 9 7 8z" fill="#b08f93" /><path d="M15 9l3.500-3.500v9L10 19z" fill="#7d3230" /><path d="M7 8l8 1-4 7z" fill="#a2a0b8" /><path d="M1.500 14.500L7 8l4 8-1 3z" fill="#726a80" /></W> },
  { id: "fusion", active: true, icon: <FusionLogo s={20} /> },
  { id: "edge", icon: <W><path d="M1 9Q3 1 11 1q7.500 1 7.500 8v2.500H7.500q0 3.500 5 3.700 3 0 5-1.200v3.500q-2.500 1.500-6 1.500Q3.500 18.500 3.500 12q0-4 4-6Q3 6 1 9zm6.700-.500h6.600q0-3-3.100-3.100-3 .1-3.500 3.100z" fill="#0e7bd8" /></W> },
  { id: "remote", icon: <W><rect width="20" height="20" fill="#0e6fd0" /><circle cx="10" cy="10" r="8" fill="#fff" /><path d="M2.500 10l4.500-3v2h6V7l4.500 3-4.500 3v-2H7v2z" fill="#0e6fd0" /></W> },
  { id: "chrome", icon: <W><circle cx="10" cy="10" r="9.300" fill="#fbc116" /><path d="M10 10L1.900 5.400A9.300 9.300 0 0118.100 5.400H10z" fill="#dc4437" /><path d="M1.900 5.400A9.300 9.300 0 009 19.300L13.500 12 6 12z" fill="#1a9c56" /><circle cx="10" cy="10" r="4.500" fill="#fff" /><circle cx="10" cy="10" r="3.500" fill="#4587f3" /></W> },
  { id: "revit-a", icon: <W><rect width="20" height="20" fill="#d8e4f2" /><path d="M0 9l7-4v15H0z" fill="#bcd0e8" /><Letter x={5} y={12.200} s={14} c="#1f4487" t="R" /><rect x="9" y="16" width="11" height="4" fill="#a9bfdf" /><Letter x={10} y={19.700} s={4} c="#1f4487" t="RVT" /></W> },
  { id: "revit-b", icon: <W><rect width="20" height="20" fill="#dbeaf5" /><path d="M0 9l7-4v15H0z" fill="#c0dbea" /><Letter x={4.500} y={16} s={16} c="#16618f" t="R" /></W> },
  { id: "wifi", icon: <W><rect width="20" height="20" rx="3" fill="#0f80c8" /><path d="M0 8V0h9z" fill="#a8cf45" /><path d="M3 15Q4 5 14 3M6 16q1-7 9-9M9 15q1-4 5-5" stroke="#fff" strokeWidth="1.600" fill="none" /><circle cx="14" cy="13.500" r="4.500" fill="#0f80c8" stroke="#fff" /><Letter x={11.500} y={16.300} s={8} c="#fff" t="z" /></W> },
  { id: "slack", icon: <W><circle cx="10" cy="10" r="9.500" fill="#fff" /><g strokeWidth="2.400" strokeLinecap="round"><path d="M8.300 4.500v.6M4.500 8.300h3.800" stroke="#36c5f0" /><path d="M11.700 4.500v3.800M15 8.300h.5" stroke="#2eb67d" /><path d="M11.700 11.700h3.800M11.700 15v.5" stroke="#ecb22e" /><path d="M8.300 11.700v3.800M4.500 11.700h.5" fill="none" stroke="#e01e5a" /></g></W> },
];

const TrayIcons = () => (
  <>
    <svg width="12" height="8" viewBox="0 0 12 8"><path d="M1 7l5-5 5 5" stroke="#eee" fill="none" strokeWidth="1.300" /></svg>
    <Gap $w={9} />
    <svg width="14" height="12" viewBox="0 0 14 12"><path d="M1 2h11v6H1z" fill="none" stroke="#fff" /><rect x="2" y="3" width="4" height="4" fill="#fff" /><circle cx="9.500" cy="7.500" r="4" fill="#23a43c" /><path d="M9.500 5v5M8 7l1.500-2L11 7" stroke="#fff" strokeWidth=".8" fill="none" /></svg>
    <Gap $w={8} />
    <svg width="12" height="12" viewBox="0 0 12 12" fill="none" stroke="#bbb" strokeWidth="1.100"><path d="M1 11Q2 3 11 1.500M4 11q1-5 7-6M7 11q.5-2.500 4-3" /><circle cx="10" cy="10.500" r=".8" fill="#fff" /></svg>
    <Gap $w={6} />
    <svg width="15" height="12" viewBox="0 0 15 12" fill="none" stroke="#eee"><path d="M1 4h2l3-3v10L3 8H1z" /><path d="M8 4q1.500 2 0 4" /><path d="M10 2.500q2.500 3.500 0 7M12 1q3.500 5 0 10" stroke="#888" /></svg>
    <Gap $w={6} />
    <svg width="13" height="13" viewBox="0 0 13 13"><circle cx="6.500" cy="6.500" r="6" fill="#9a9a9a" /><path d="M4 4l5 5M9 4l-5 5" stroke="#222" strokeWidth="1.500" /></svg>
  </>
);

const Grp = ({ w, label, shift = 0, sx = 0.95, children }: { w: number; label: string; shift?: number; sx?: number; children: React.ReactNode }) => (
  <Group $w={w} $shift={shift}>
    <IconRow>{children}</IconRow>
    <GroupLabel><Label $ls={-0.5} $sx={sx} $origin="right">{label}</Label><Caret /></GroupLabel>
  </Group>
);

export default function App() {
  return (
    <Screen>
      <GlobalStyle />
      <TitleBar>
        <FusionLogo s={12} />
        <Gap $w={6} />
        <Label $size={11.500} $ls={-0.36} $sx={0.868}>Autodesk Fusion 360(教育機関ライセンス)</Label>
        <WindowButtons>
          <svg width="9" height="9" viewBox="0 0 9 9"><path d="M0 4.500h9" stroke="#222" /></svg>
          <svg width="10" height="9" viewBox="0 0 10 9" fill="none" stroke="#222"><path d="M.5 2.500h6v6h-6zM2.500 2.500v-2h6.500v6H6.500" /></svg>
          <svg width="10" height="10" viewBox="0 0 10 10"><path d="M.5.5l9 9M9.500.5l-9 9" stroke="#222" strokeWidth="1.100" /></svg>
        </WindowButtons>
      </TitleBar>

      <AppBar>
        <QuickTools>
          <svg width="13" height="13" viewBox="0 0 13 13" fill="#636363">{[0, 4.700, 9.400].map((x) => [0, 4.700, 9.400].map((y) => <rect key={`${x}-${y}`} x={x} y={y} width="3.600" height="3.600" />))}</svg>
          <Gap $w={16} />
          <svg width="11" height="14" viewBox="0 0 11 14"><path d="M0 0h7v4h4v10H0zM8 0l3 3H8z" fill="#5d5d5d" /></svg>
          <Gap $w={5} /><Caret c="#5d5d5d" s={6} /><Gap $w={17} />
          <svg width="12" height="13" viewBox="0 0 12 13"><path d="M0 0h10l2 2v11H0z" fill="#686868" /><path d="M3 0h6v4.500H3zM2.500 7h7v6h-7z" fill="#c9c9c9" /><path d="M6.500 1h1.500v3H6.500zM4.500 9h3v4h-3z" fill="#686868" /></svg>
          <Gap $w={16} />
          <svg width="12" height="11" viewBox="0 0 12 11"><path d="M4.500 0v3Q11 3 11 11 9 6.500 4.500 6.800V9.500L0 4.800z" fill="#636363" /></svg>
          <Gap $w={7} /><Caret c="#5d5d5d" s={6} /><Gap $w={11} />
          <svg width="12" height="11" viewBox="0 0 12 11"><path d="M7.500 0v3Q1 3 1 11 3 6.500 7.500 6.800V9.500L12 4.800z" fill="#949494" /></svg>
          <Gap $w={6} /><Caret c="#8a8a8a" s={6} />
        </QuickTools>
        <DocTab>
          <svg width="14" height="14" viewBox="0 0 14 14"><path d="M0 3l7-3 7 3v8l-7 3-7-3z" fill="#666" /><path d="M7 6l7-3v8l-7 3z" fill="#888" /><path d="M0 3l7-3 7 3-7 3z" fill="#777" /></svg>
          <Gap $w={5} /><Label $size={10.500} $sx={0.98}>project v5*</Label>
          <CloseTab><svg width="8" height="8" viewBox="0 0 8 8"><path d="M1 1l6 6M7 1L1 7" stroke="#777" strokeWidth="1.300" /></svg></CloseTab>
        </DocTab>
        <NewTab><svg width="12" height="12" viewBox="0 0 12 12"><path d="M6 .5v11M.5 6h11" stroke="#777" strokeWidth="2.600" /></svg></NewTab>
        <AccountTools>
          <svg width="14" height="13" viewBox="0 0 14 13"><path d="M0 0h14v9h-1v4L9 9H0z" fill="#666" /><path d="M2.500 3h9M2.500 5.800h9" stroke="#ccc" /></svg>
          <Gap $w={14} />
          <svg width="14" height="14" viewBox="0 0 14 14"><circle cx="7" cy="7" r="7" fill="#636363" /><path d="M3 11l4-4Q6 4 9.500 3L8.500 5l1 1 2-1q-.5 3.500-3.500 3l-4 4z" fill="#d5d5d5" /></svg>
          <Gap $w={14} />
          <svg width="14" height="14" viewBox="0 0 14 14"><circle cx="7" cy="7" r="6.300" fill="none" stroke="#666" strokeWidth="1.200" /><circle cx="7" cy="7" r="4.700" fill="#666" /><path d="M7 4v3.500h3" stroke="#ddd" fill="none" /></svg>
          <Gap $w={3} /><Label $color="#5b2f70" $size={9.500}>1</Label>
          <Gap $w={26} /><Label $ls={-0.5} $sx={0.93}>洸星 松井</Label><Gap $w={18} />
          <svg width="14" height="14" viewBox="0 0 14 14"><circle cx="7" cy="7" r="7" fill="#636363" /><text x="3.800" y="11" fontSize="11" fontWeight="700" fill="#ddd" fontFamily="Liberation Sans">?</text></svg>
        </AccountTools>
      </AppBar>

      <Ribbon>
        <Workspace><Label $bold $ls={-1} $sx={0.88} $origin="right">デザイン</Label><Caret c="#333" /></Workspace>
        <RibbonBody>
          <Tabs>
            <Tab $w={99} $active><Label $ls={-1} $sx={0.84} $origin="center">基準フィーチャ ソリッド</Label></Tab>
            <Tab $w={146}><Label $ls={-0.8} $sx={0.84} $origin="center">基準フィーチャ サーフェス</Label></Tab>
            <Tab $w={65}><Label $ls={-0.9} $sx={0.86} $origin="center">シート メタル</Label></Tab>
            <Tab $w={80}><Label $ls={-1} $sx={0.8} $origin="center">ツール</Label></Tab>
          </Tabs>
          <Groups>
            <Grp w={226} label="作成" shift={6}><SketchBig /><ExtrudeBig /><RevolveBig /><HoleBig /><PatternBig /><FormBig /></Grp>
            <Grp w={231.500} label="修正"><PressPull /><FilletBig /><ShellBig /><CombineBig /><SplitBig /><MoveBig /></Grp>
            <Grp w={82.500} label="アセンブリ" sx={0.78}><NewComp /><JointBig /></Grp>
            <Grp w={51} label="構築"><PlaneBig /></Grp>
            <Grp w={51} label="検査"><MeasureBig /></Grp>
            <Grp w={51} label="挿入"><ImageBig /></Grp>
            <Grp w={51.500} label="選択"><SelectTile><SelectBig /></SelectTile></Grp>
          </Groups>
        </RibbonBody>
      </Ribbon>

      <CanvasArea>
        <SectionView />
        <Overlay $x={3} $y={4}>
          <PanelBar>
            <svg width="9" height="6" viewBox="0 0 9 6"><path d="M4.500 0v6L0 3zM9 0v6L4.500 3z" fill="#333" /></svg>
            <Gap $w={8} /><Label $ls={-1} $sx={0.82}>ブラウザ</Label>
            <PanelEnd><RoundBadge /><Grip /></PanelEnd>
          </PanelBar>
        </Overlay>
        <Overlay $x={0} $y={25.500}><BrowserTree /></Overlay>
        <Overlay $x={3} $y={709}>
          <PanelBar>
            <Gap $w={16} /><Label $ls={-1.300} $sx={0.82}>コメント</Label>
            <PanelEnd><RoundBadge plus /><Grip /></PanelEnd>
          </PanelBar>
        </Overlay>
        <Overlay $x={716} $y={710}><NavBar><NavIcons /></NavBar></Overlay>
        <Overlay $x={1573} $y={32}><Cube><Label $size={27} $color="#8b9299">後</Label></Cube></Overlay>
        <Overlay $x={1611} $y={19}><Label $size={13} $color="#8484ff">Z</Label></Overlay>
        <Overlay $x={1563} $y={68}><Label $size={12} $color="#ff7b7b">X</Label></Overlay>
        <Overlay $x={1618} $y={75}><Label $size={10} $color="#6cf06c">Y</Label></Overlay>
      </CanvasArea>

      <TimelineBar>
        <ScrollTrack><ScrollThumb /></ScrollTrack>
        <TimelineRow>
          <Playback>
            <svg width="11" height="12" viewBox="0 0 11 12" fill="#444"><path d="M0 0h1.800v12H0zM11 0v12L2.500 6z" /></svg>
            <svg width="12" height="12" viewBox="0 0 12 12" fill="#444"><path d="M8.500 1v10L0 6zM9.500 3.500h1.800v5H9.500z" /></svg>
            <svg width="11" height="13" viewBox="0 0 11 13" fill="#444"><path d="M0 0v13l11-6.500z" /></svg>
            <svg width="12" height="12" viewBox="0 0 12 12" fill="#444"><path d="M3.500 1v10L12 6zM.7 3.500h1.800v5H.7z" /></svg>
            <svg width="11" height="12" viewBox="0 0 11 12" fill="#444"><path d="M9.200 0H11v12H9.200zM0 0v12l8.500-6z" /></svg>
          </Playback>
          {SEQUENCE.split("").map((k, i) => {
            const Icon = FEATURES[k];
            return (
              <Feature key={i}>
                <FeatureTile $on={k === "Y"}><Icon /></FeatureTile>
                <Tick />
                {k === "I" && <GroupMark />}
              </Feature>
            );
          })}
          <Playhead width="9" height="28" viewBox="0 0 9 28"><path d="M0 0h9v4L5.500 8v20h-2V8L0 4z" fill="#666" /></Playhead>
          <Gap $w={13} />
          <svg width="14" height="37" viewBox="0 0 14 37"><g transform="translate(0 12)"><Gear c="#8b8b8b" /></g></svg>
        </TimelineRow>
      </TimelineBar>

      <Taskbar>
        <StartButton><svg width="14" height="14" viewBox="0 0 14 14" fill="#fff"><path d="M0 2l6-.9v5.500H0zM6.800 1L14 0v6.600H6.800zM0 7.400h6v5.500L0 12zM6.800 7.400H14V14l-7.200-1z" /></svg></StartButton>
        <SearchBox>
          <svg width="15" height="15" viewBox="0 0 15 15"><circle cx="9" cy="5.800" r="4.800" fill="none" stroke="#333" strokeWidth="1.200" /><path d="M5.500 9.500L.8 14.200" stroke="#333" strokeWidth="1.300" /></svg>
          <Label $size={12.500} $ls={-0.2} $sx={0.935}>ここに入力して検索</Label>
        </SearchBox>
        {TASKS.map((t) => <TaskItem key={t.id} $active={t.active} $open={t.open}>{t.icon}</TaskItem>)}
        <Tray>
          <TrayIcons />
          <Clock><Label $size={10} $ls={-0.5}>12:08</Label><Label $size={10} $ls={-0.15}>2019/10/18</Label></Clock>
          <Gap $w={11} />
          <svg width="20" height="22" viewBox="0 0 20 22"><path d="M0 2h14v10H6l-3 3v-3H0z" fill="#fff" /><path d="M2.500 5h9M2.500 7.500h9M2.500 10h6" stroke="#333" /><circle cx="13.500" cy="14" r="6.500" fill="#2b2b2b" stroke="#888" /><text x="11" y="18" fontSize="10" fill="#fff" fontFamily="Liberation Sans">1</text></svg>
          <ShowDesktop />
        </Tray>
      </Taskbar>
    </Screen>
  );
}
